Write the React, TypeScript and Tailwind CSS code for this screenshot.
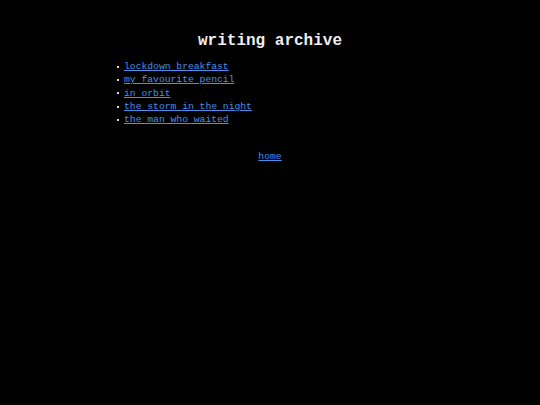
const posts = [
  "lockdown breakfast",
  "my favourite pencil",
  "in orbit",
  "the storm in the night",
  "the man who waited",
];

export default function App() {
  return (
    <div className="min-h-[405px] bg-black text-white font-['Liberation_Mono',monospace]">
      <div className="mx-auto w-[372px] pt-[31px]">
        <h1 className="text-center text-[16px] font-bold leading-[20px] text-[#eeeeee]">
          writing archive
        </h1>
        <ul className="mt-[9px] pl-[40px] text-[9.7px] leading-[13.3px]">
          {posts.map((p) => (
            <li key={p} className="flex items-center">
              <span className="absolute -ml-[7px] h-[2px] w-[2px] bg-[#dddddd]" />
              <a href="#" className="text-[#4790ec] underline">
                {p}
              </a>
            </li>
          ))}
        </ul>
        <div className="mt-[24px] text-center text-[9.7px] leading-[13px]">
          <a href="#" className="text-[#4790ec] underline">
            home
          </a>
        </div>
      </div>
    </div>
  );
}
